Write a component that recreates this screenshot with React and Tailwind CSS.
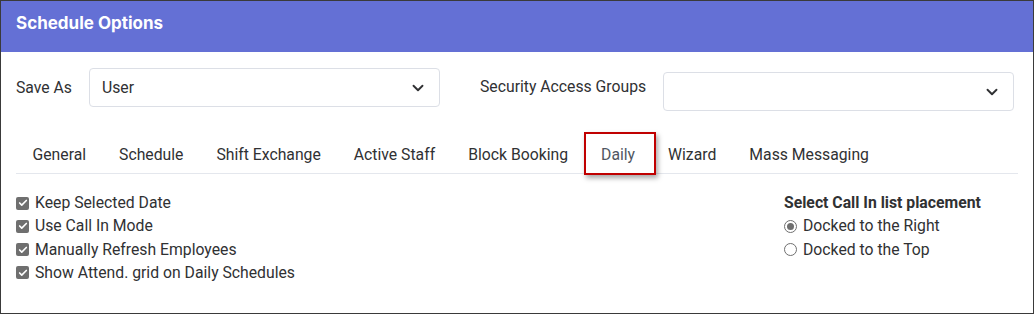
import { ChevronDown, Check } from "lucide-react";

const tabs = ["General", "Schedule", "Shift Exchange", "Active Staff", "Block Booking", "Daily", "Wizard", "Mass Messaging"];
const checks = ["Keep Selected Date", "Use Call In Mode", "Manually Refresh Employees", "Show Attend. grid on Daily Schedules"];

function Select({ value, className }) {
  return (
    <div className={`flex items-center justify-between rounded border border-[#dcdfe6] bg-white pl-[12px] pr-[12px] ${className}`}>
      <span className="text-[15.75px] text-[#303133]">{value}</span>
      <ChevronDown size={18} strokeWidth={2.5} className="text-[#303133]" />
    </div>
  );
}

export default function App() {
  return (
    <div className="w-[1034px] h-[314px] border border-[#3a3a3a] bg-white flex flex-col text-[#303133]" style={{ fontFamily: "Roboto, 'Liberation Sans', sans-serif" }}>
      <div className="h-[51px] bg-[#6470d5] flex items-center px-[15px] pb-[5px]">
        <h1 className="text-white text-[17px] font-bold" style={{ fontFamily: "Inter, 'Noto Sans', sans-serif" }}>Schedule Options</h1>
      </div>

      <div className="flex items-start pt-[16px] px-[15px]">
        <div className="flex items-center">
          <span className="text-[15.75px] w-[73px]">Save As</span>
          <Select value="User" className="w-[351px] h-[39px]" />
        </div>
        <div className="flex items-start ml-[40px]">
          <span className="text-[15.75px] w-[183px] h-[39px] leading-[38px]">Security Access Groups</span>
          <Select value="" className="w-[351px] h-[39px] mt-[4px]" />
        </div>
      </div>

      <div className="mx-[15px] mt-[21px] border-b border-[#e4e7ed] flex h-[42px]">
        {tabs.map((t) =>
          t === "Daily" ? (
            <div key={t} className="relative flex items-center pt-[5px] px-[16.5px]">
              <span className="text-[15.75px] text-[#505662]">{t}</span>
              <div className="absolute left-[-1px] right-[-4px] top-[0px] bottom-[-2px] border-2 border-[#c00000] shadow-[2px_3px_5px_rgba(0,0,0,0.35)]" />
            </div>
          ) : (
            <div key={t} className="flex items-center pt-[5px] px-[16.5px]">
              <span className="text-[15.75px]">{t}</span>
            </div>
          )
        )}
      </div>

      <div className="flex px-[15px] pt-[20px]">
        <div className="flex flex-col gap-[5.3px]">
          {checks.map((c) => (
            <label key={c} className="flex items-center gap-[6px] h-[18px]">
              <span className="w-[13px] h-[13px] rounded-[2px] bg-[#6f6f6f] flex items-center justify-center">
                <Check size={10} strokeWidth={4} className="text-white" />
              </span>
              <span className="text-[15.75px]">{c}</span>
            </label>
          ))}
        </div>
        <div className="ml-auto w-[234px] flex flex-col gap-[5.3px]">
          <div className="text-[15.75px] font-bold h-[18px] leading-[18px]">Select Call In list placement</div>
          <label className="flex items-center gap-[6px] h-[18px]">
            <span className="w-[13px] h-[13px] rounded-full border border-[#6f6f6f] flex items-center justify-center">
              <span className="w-[7px] h-[7px] rounded-full bg-[#6f6f6f]" />
            </span>
            <span className="text-[15.75px]">Docked to the Right</span>
          </label>
          <label className="flex items-center gap-[6px] h-[18px]">
            <span className="w-[13px] h-[13px] rounded-full border border-[#6f6f6f]" />
            <span className="text-[15.75px]">Docked to the Top</span>
          </label>
        </div>
      </div>
    </div>
  );
}
